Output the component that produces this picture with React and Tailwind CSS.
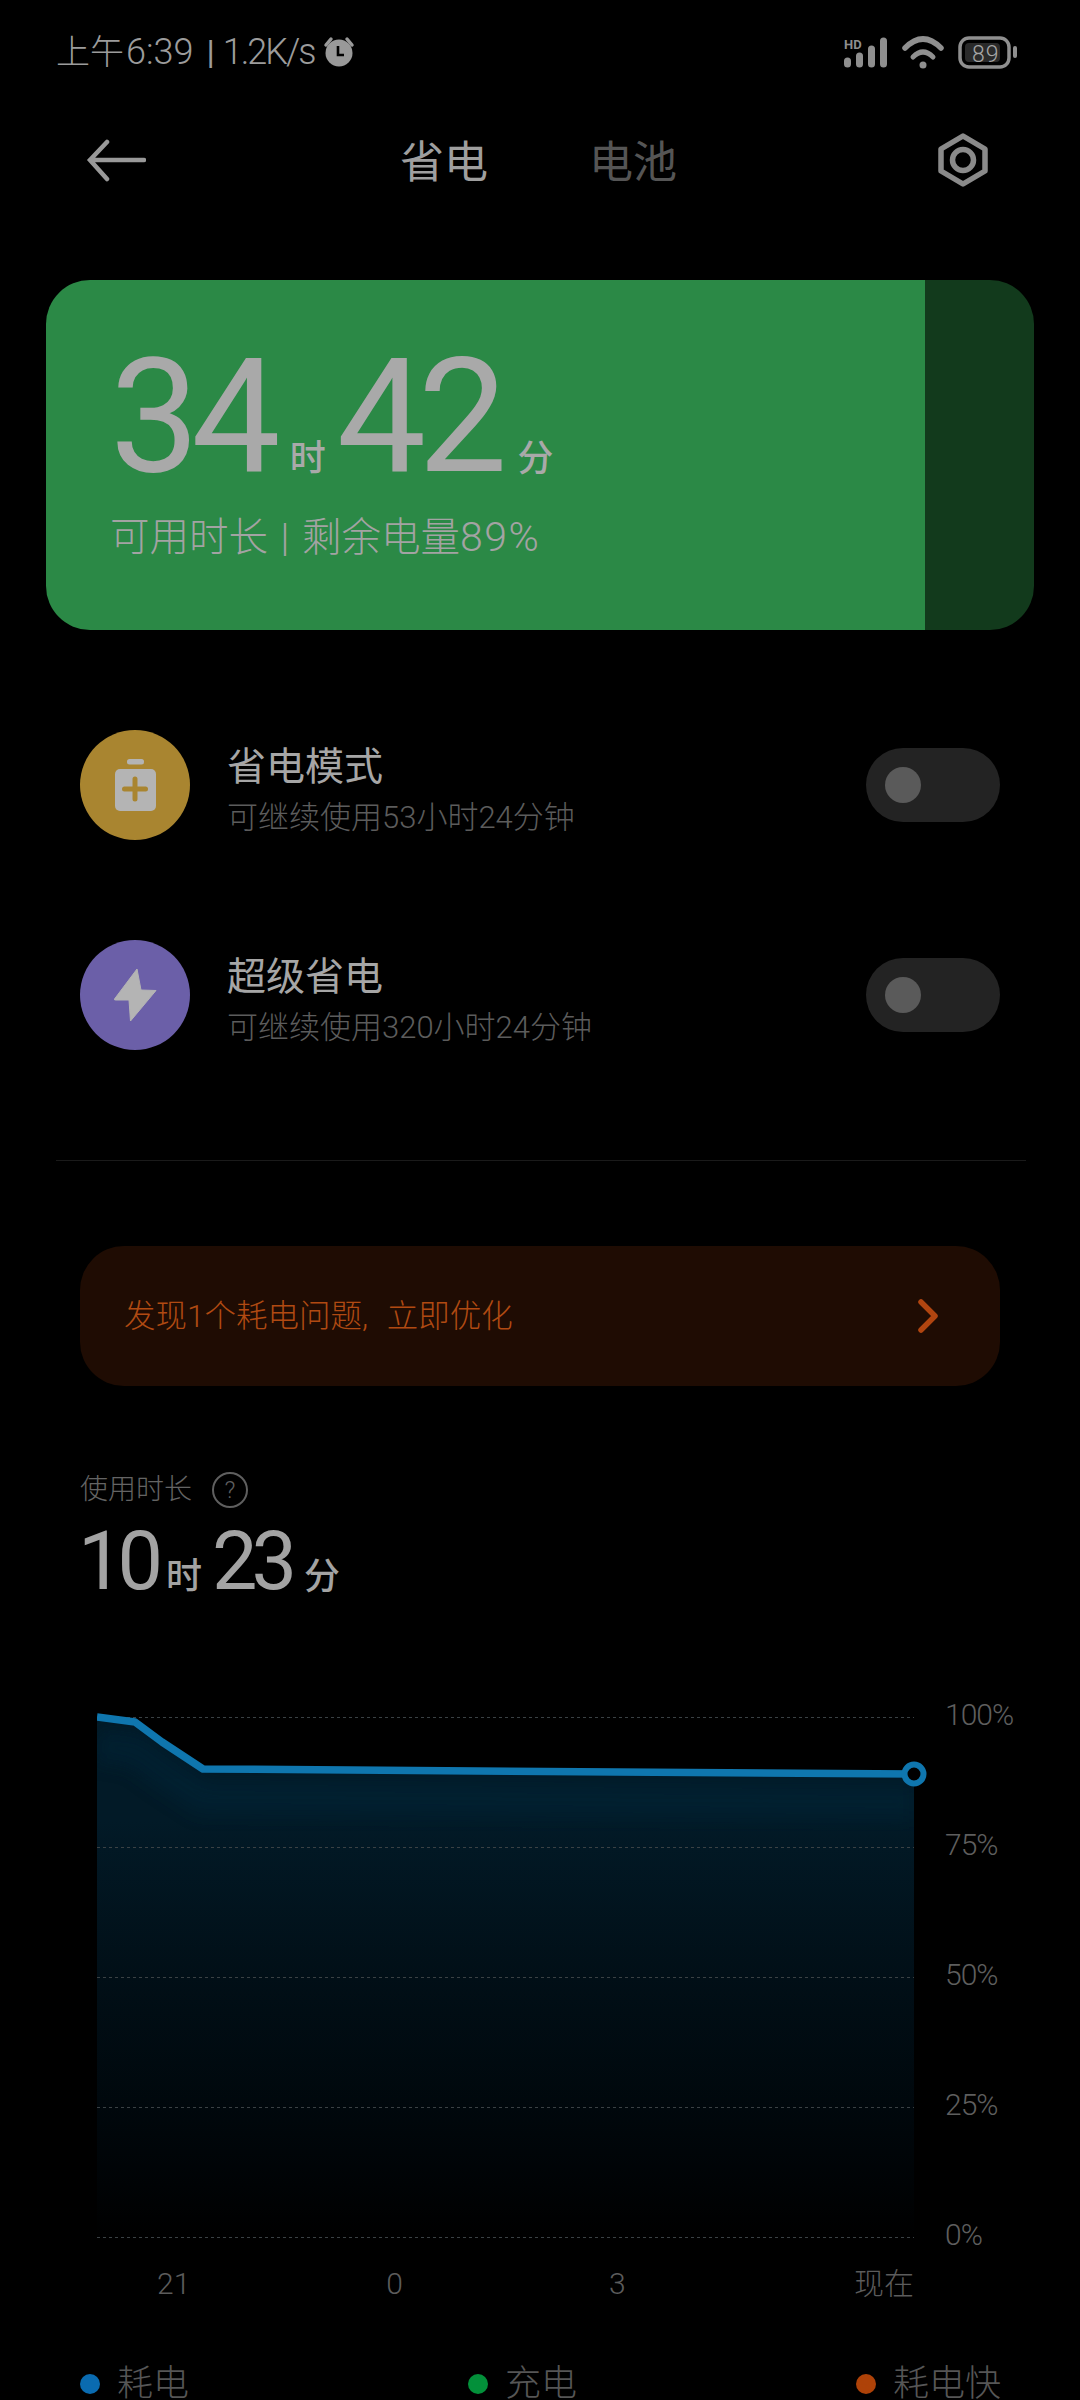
const FONT = "font-['Roboto','Noto_Sans_CJK_SC',sans-serif]";

function Alarm() {
  return (
    <svg width="32" height="32" viewBox="0 0 32 32" className="ml-[8px]">
      <circle cx="16" cy="17" r="13.5" fill="#999" />
      <path d="M3 9 L8 3 M29 9 L24 3" stroke="#999" strokeWidth="3.5" strokeLinecap="round" />
      <path d="M15 10 V19 H21" stroke="#000" strokeWidth="2.6" fill="none" />
    </svg>
  );
}

function StatusIcons() {
  return (
    <svg width="176" height="40" viewBox="842 32 176 40">
      <text x="844" y="49" fontSize="13" fontWeight="700" fill="#8f8f8f" fontFamily="Roboto, sans-serif">HD</text>
      <g stroke="#8f8f8f" strokeWidth="7" strokeLinecap="round">
        <path d="M847.5 61 V64" />
        <path d="M859.5 56 V64" />
        <path d="M871.5 49 V64" />
        <path d="M883.5 41 V64" />
      </g>
      <path d="M905 48 Q923 30 941 48" stroke="#8f8f8f" strokeWidth="5.5" fill="none" strokeLinecap="round" />
      <path d="M913 57 Q923 47 933 57" stroke="#8f8f8f" strokeWidth="5" fill="none" strokeLinecap="round" />
      <circle cx="923" cy="65" r="3.5" fill="#8f8f8f" />
      <rect x="960" y="38" width="49" height="29" rx="9" fill="none" stroke="#8f8f8f" strokeWidth="3.5" />
      <rect x="965" y="43" width="35" height="19" rx="4" fill="#2a2a2a" />
      <text x="972" y="62" fontSize="23" fill="#a6a6a6" fontFamily="Roboto, sans-serif" fontWeight="300" letterSpacing="1">89</text>
      <rect x="1013" y="46" width="4" height="12" rx="2" fill="#8f8f8f" />
    </svg>
  );
}

function BackArrow() {
  return (
    <svg width="60" height="44" viewBox="86 138 60 44" className="ml-[86px]">
      <path d="M107 142 L90 160 L107 179 M90 160 H144" stroke="#999" strokeWidth="4.5" fill="none" strokeLinecap="round" strokeLinejoin="miter" />
    </svg>
  );
}

function Hex() {
  return (
    <svg width="54" height="58" viewBox="937 131 54 58" className="ml-[259px]">
      <path d="M964 136 L986 149 V171 L964 184 L942 171 V149 Z" stroke="#8a8a8a" strokeWidth="5.5" fill="none" strokeLinejoin="round" />
      <circle cx="964" cy="160" r="10.5" stroke="#8a8a8a" strokeWidth="5.5" fill="none" />
    </svg>
  );
}

function BatteryBadge() {
  return (
    <svg width="110" height="110" viewBox="0 0 110 110" className="shrink-0">
      <circle cx="55" cy="55" r="55" fill="#a98530" />
      <rect x="47" y="29" width="17" height="5.5" rx="2.5" fill="#b4b4b4" />
      <rect x="35" y="39" width="41" height="42" rx="5" fill="#b4b4b4" />
      <path d="M55 49 V69 M44.5 59 H65.5" stroke="#a98530" strokeWidth="5" strokeLinecap="round" />
    </svg>
  );
}

function BoltBadge() {
  return (
    <svg width="110" height="110" viewBox="0 0 110 110" className="shrink-0">
      <circle cx="55" cy="55" r="55" fill="#6b5fa8" />
      <path d="M57 29 L34.5 59 Q34 60 35.5 60 L49 60 L50.5 81 L76 50.5 L61 50 Z" fill="#b4b4b4" stroke="#b4b4b4" strokeWidth="1" strokeLinejoin="round" />
    </svg>
  );
}

function Row({ badge, title, sub, className }) {
  return (
    <div className={`flex items-center h-[110px] ml-[80px] w-[920px] ${className}`}>
      {badge}
      <div className="ml-[37px] flex-1 flex flex-col pt-[10px]">
        <div className="text-[39px] leading-[44px] text-[#a6a6a6]">{title}</div>
        <div className="text-[31px] leading-[36px] mt-[11px] font-light text-[#5c5c5c]">{sub}</div>
      </div>
      <div className="w-[134px] h-[74px] rounded-full bg-[#232323] flex items-center pl-[19px]">
        <div className="w-[36px] h-[36px] rounded-full bg-[#5a5a5a]" />
      </div>
    </div>
  );
}

function Chart() {
  const line = "M97 1717 L135 1722 L162 1742 L203 1769 L914 1774";
  const glow = "M97 1745 L135 1750 L162 1770 L203 1797 L914 1802";
  const area = line + " L914 2237 L97 2237 Z";
  return (
    <svg width="836" height="550" viewBox="97 1695 836 550" className="shrink-0">
      <defs>
        <linearGradient id="fade" gradientUnits="userSpaceOnUse" x1="0" y1="1717" x2="0" y2="2237">
          <stop offset="0" stopColor="#021a27" />
          <stop offset="0.2" stopColor="#021a27" />
          <stop offset="0.5" stopColor="#010f17" />
          <stop offset="0.8" stopColor="#00060a" />
          <stop offset="1" stopColor="#000" />
        </linearGradient>
        <clipPath id="areaClip"><path d={area} /></clipPath>
        <filter id="soft" x="-5%" y="-50%" width="110%" height="200%"><feGaussianBlur stdDeviation="9" /></filter>
      </defs>
      <path d={area} fill="url(#fade)" />
      <g clipPath="url(#areaClip)">
        <path d={glow} stroke="#03283a" strokeWidth="34" fill="none" filter="url(#soft)" opacity="0.45" />
      </g>
      {[1717, 1847, 1977, 2107, 2237].map((y) => (
        <line key={y} x1="97" x2="914" y1={y + 0.5} y2={y + 0.5} stroke="#3a4144" strokeWidth="1" strokeDasharray="3 3" />
      ))}
      <path d={line} stroke="#0f76ae" strokeWidth="7.5" fill="none" strokeLinejoin="round" />
      <circle cx="914" cy="1774" r="9.5" fill="#000" stroke="#0f76ae" strokeWidth="6" />
    </svg>
  );
}

export default function App() {
  return (
    <div className={`w-[1080px] h-[2400px] overflow-hidden bg-black ${FONT}`}>
      <div className="h-[104px] flex items-center text-[#9c9c9c] text-[34px] font-light">
        <span className="ml-[56px]">上午</span>
        <span className="ml-[2px] text-[36px]">6:39</span>
        <span className="ml-[13px] font-normal">|</span>
        <span className="ml-[8px] text-[36px] tracking-[-2px]">1.2K/s</span>
        <Alarm />
        <div className="ml-auto mr-[62px]"><StatusIcons /></div>
      </div>

      <div className="h-[112px] flex items-center">
        <BackArrow />
        <span className="ml-[254px] pt-[6px] text-[44px] text-[#9f9f9f]">省电</span>
        <span className="ml-[101px] pt-[6px] text-[44px] text-[#555555]">电池</span>
        <Hex />
      </div>

      <div className="mt-[64px] ml-[46px] w-[988px] h-[350px] rounded-[44px] overflow-hidden flex">
        <div className="flex-1 bg-[#2b8946] pl-[66px] pt-[54px]">
          <div className="flex items-baseline h-[166px] text-[#a9a9a9]">
            <span className="text-[159px] leading-[166px] tracking-[-8px] -ml-[2px]">34</span>
            <span className="text-[36px] ml-[17px] font-medium">时</span>
            <span className="text-[159px] leading-[166px] tracking-[-8px] ml-[11px]">42</span>
            <span className="text-[36px] ml-[18px] font-medium">分</span>
          </div>
          <div className="text-[39.5px] leading-[48px] mt-[13px] -ml-[2px] font-light text-[#a3a3a3] [word-spacing:3px]">可用时长 | 剩余电量<span className="text-[41px] tracking-[1.5px]">89%</span></div>
        </div>
        <div className="w-[109px] bg-[#123a1c]" />
      </div>

      <Row className="mt-[100px]" badge={<BatteryBadge />} title="省电模式" sub="可继续使用53小时24分钟" />
      <Row className="mt-[100px]" badge={<BoltBadge />} title="超级省电" sub="可继续使用320小时24分钟" />

      <div className="mt-[110px] ml-[56px] w-[970px] h-[1px] bg-[#1a1a1a]" />

      <div className="mt-[85px] ml-[80px] w-[920px] h-[140px] rounded-[44px] bg-[#1f0c03] flex items-center pl-[44px] pr-[60px]">
        <span className="text-[31.5px] font-light text-[#b04a12] pt-[2px]">发现1个耗电问题<span className="mr-[11px]">, </span>立即优化</span>
        <svg width="22" height="34" viewBox="0 0 22 34" className="ml-auto">
          <path d="M3 3 L17 17 L3 31" stroke="#b04510" strokeWidth="5.5" fill="none" strokeLinecap="round" strokeLinejoin="round" />
        </svg>
      </div>

      <div className="mt-[85px] ml-[80px] flex items-center h-[38px]">
        <span className="text-[28px] font-light text-[#646464]">使用时长</span>
        <div className="ml-[20px] w-[36px] h-[36px] rounded-full border-[2.5px] border-[#5f5f5f] flex items-center justify-center text-[24px] leading-none text-[#5f5f5f] font-light">?</div>
      </div>

      <div className="mt-[13px] ml-[78px] flex items-baseline h-[80px] text-[#a3a3a3]">
        <span className="text-[81px] leading-[80px] tracking-[-6px]">10</span>
        <span className="text-[36px] ml-[9px] font-medium">时</span>
        <span className="text-[81px] leading-[80px] tracking-[-6px] ml-[10px]">23</span>
        <span className="text-[36px] ml-[13px] font-medium">分</span>
      </div>

      <div className="mt-[93px] ml-[97px] flex">
        <Chart />
        <div className="ml-[12px] flex flex-col gap-[90px] text-[30px] leading-[40px] font-light text-[#5e5e5e] -tracking-[1px]">
          <span>100%</span>
          <span>75%</span>
          <span>50%</span>
          <span>25%</span>
          <span>0%</span>
        </div>
      </div>

      <div className="ml-[97px] w-[817px] h-[40px] mt-[9px] flex text-[30px] leading-[40px] font-light text-[#5c5c5c]">
        <span className="ml-[60px]">21</span>
        <span className="ml-[196px]">0</span>
        <span className="ml-[206px]">3</span>
        <span className="ml-auto">现在</span>
      </div>

      <div className="mt-[58px] ml-[80px] w-[1000px] grid grid-cols-[388px_388px_1fr] text-[36px] leading-[44px] font-light text-[#565656]">
        <div className="flex items-center gap-[17px]"><span className="w-[20px] h-[20px] rounded-full bg-[#0a6bb0]" />耗电</div>
        <div className="flex items-center gap-[17px]"><span className="w-[20px] h-[20px] rounded-full bg-[#03903a]" />充电</div>
        <div className="flex items-center gap-[17px]"><span className="w-[20px] h-[20px] rounded-full bg-[#ae4208]" />耗电快</div>
      </div>
    </div>
  );
}
